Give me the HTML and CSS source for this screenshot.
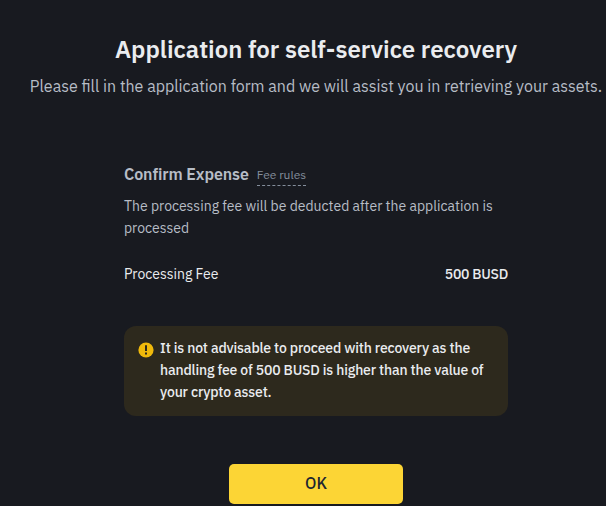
FILE: index.html
```
<!DOCTYPE html>
<html lang="en">
<head>
<meta charset="utf-8">
<title>Application for self-service recovery</title>
<link rel="stylesheet" href="styles.css">
</head>
<body>

<div class="page">
  <h1 class="title">Application for self-service recovery</h1>
  <p class="subtitle">Please fill in the application form and we will assist you in retrieving your assets.</p>

  <div class="content">
    <div class="heading">
      <h2>Confirm Expense</h2>
      <a class="rules">Fee rules</a>
    </div>
    <p class="desc">The processing fee will be deducted after the application is<br>processed</p>

    <div class="fee">
      <span>Processing Fee</span>
      <span class="fee-value">500 BUSD</span>
    </div>

    <div class="notice">
      <svg class="notice-icon" width="16" height="16" viewBox="0 0 16 16">
        <circle cx="8" cy="8" r="7.6" fill="#f0b90b"/>
        <path d="M7 3.3h2v5.7H7zM7 10.5h2v2H7z" fill="#2d291d"/>
      </svg>
      <p class="notice-text">It is not advisable to proceed with recovery as the<br>handling fee of 500 BUSD is higher than the value of<br>your crypto asset.</p>
    </div>
  </div>

  <button class="ok">OK</button>
</div>

</body>
</html>
```
FILE: styles.css
```
body {
  margin: 0;
  background: #181a20;
  color: #eaecef;
  font-family: "IBM Plex Sans", "Noto Sans", sans-serif;
  overflow: hidden;
}

h1, h2, p {
  margin: 0;
}

.page {
  display: flex;
  flex-direction: column;
  align-items: center;
  width: 632px;
  padding-top: 33px;
}

.title {
  font-size: 24px;
  line-height: 32px;
  font-weight: 600;
  white-space: nowrap;
}

.subtitle {
  margin-top: 9px;
  font-size: 16px;
  line-height: 24px;
  color: #b7bdc6;
  white-space: nowrap;
}

.content {
  width: 384px;
  margin-top: 64px;
}

.heading {
  display: flex;
  align-items: center;
}

.heading h2 {
  font-size: 16px;
  line-height: 24px;
  font-weight: 600;
  color: #b7bdc6;
  letter-spacing: -0.1px;
}

.rules {
  margin-left: 8px;
  margin-top: 3px;
  font-size: 12px;
  line-height: 20px;
  color: #848e9c;
  border-bottom: 1px dashed #848e9c;
}

.desc {
  margin-top: 9px;
  font-size: 14px;
  line-height: 22px;
  color: #b7bdc6;
  white-space: nowrap;
}

.fee {
  display: flex;
  justify-content: space-between;
  margin-top: 24px;
  font-size: 14px;
  line-height: 22px;
}

.fee-value {
  font-weight: 500;
  letter-spacing: -0.25px;
}

.notice {
  display: flex;
  box-sizing: border-box;
  height: 90px;
  margin-top: 41px;
  padding: 11px 14px;
  border-radius: 12px;
  background: #2d291d;
}

.notice-icon {
  flex: none;
  margin: 5px 6px 0 0;
}

.notice-text {
  font-size: 14px;
  line-height: 22px;
  font-weight: 500;
  white-space: nowrap;
  letter-spacing: -0.16px;
}

.ok {
  width: 174px;
  height: 40px;
  margin-top: 48px;
  padding: 0 0 3px;
  border: 0;
  border-radius: 5px;
  background: #fcd535;
  color: #202630;
  font: 500 16px/24px "IBM Plex Sans", "Noto Sans", sans-serif;
}
```
